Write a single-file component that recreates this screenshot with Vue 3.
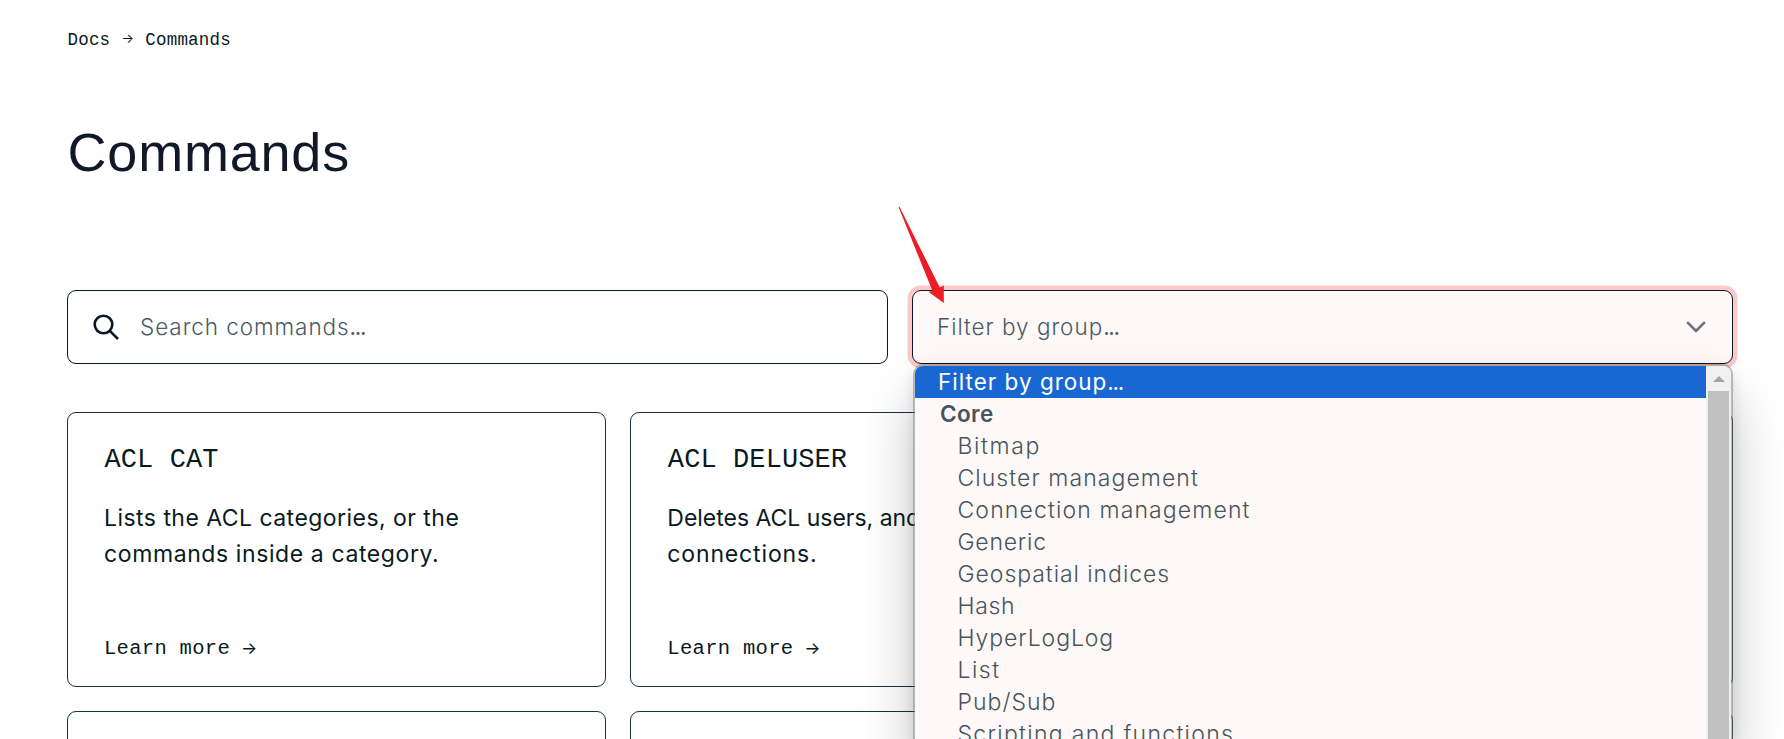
<script setup>
// Each label carries its own tracking, in pixels.
const groups = [
  { label: 'Bitmap', track: 1.65 },
  { label: 'Cluster management', track: 1.07 },
  { label: 'Connection management', track: 1.13 },
  { label: 'Generic', track: 0.75 },
  { label: 'Geospatial indices', track: 0.95 },
  { label: 'Hash', track: 0.65 },
  { label: 'HyperLogLog', track: 0.92 },
  { label: 'List', track: 1.5 },
  { label: 'Pub/Sub', track: 1.03 },
  { label: 'Scripting and functions', track: 1.3 }
]
const cards = [
  {
    name: 'ACL CAT',
    lines: [
      { text: 'Lists the ACL categories, or the', track: 0.46 },
      { text: 'commands inside a category.', track: 0.6 }
    ]
  },
  {
    name: 'ACL DELUSER',
    lines: [
      { text: 'Deletes ACL users, and', track: -0.02 },
      { text: 'connections.', track: 0.85 }
    ]
  },
  { name: '', lines: [] },
  { name: '', lines: [] },
  { name: '', lines: [] },
  { name: '', lines: [] }
]
</script>

<template>
  <main class="page">
    <nav class="crumbs">
      <span>Docs</span>
      <span class="arrow">→</span>
      <span>Commands</span>
    </nav>
    <h1>Commands</h1>

    <section class="filters">
      <div class="field search">
        <svg class="glass" viewBox="0 0 28 28" fill="none">
          <circle cx="11.5" cy="11.5" r="8.8" />
          <path d="M17.8 17.8 26 26" />
        </svg>
        <span class="hint">Search commands<span class="dots">...</span></span>
      </div>

      <div class="group">
        <div class="field select">
          <span class="chosen">Filter by group<span class="dots">...</span></span>
          <svg class="chevron" viewBox="0 0 20 12" fill="none">
            <path d="M2 1.8 10 10 18 1.8" />
          </svg>
        </div>
        <div class="menu">
          <ul class="options">
            <li class="active">Filter by group<span class="dots">...</span></li>
            <li class="heading">Core</li>
            <li v-for="g in groups" :key="g.label" class="item" :style="{ letterSpacing: g.track + 'px' }">{{ g.label }}</li>
          </ul>
          <div class="scrollbar">
            <div class="up"><i></i></div>
            <div class="thumb"></div>
          </div>
        </div>
        <svg class="pointer" viewBox="0 0 48 98">
          <path d="M0.5 1 34.5 85 30.5 85.8 45.8 97 45.8 79.5 41.8 81.5 1.5 0.8Z" />
        </svg>
      </div>
    </section>

    <section class="cards">
      <article v-for="(c, i) in cards" :key="i" class="card">
        <template v-if="c.name">
          <h2>{{ c.name }}</h2>
          <p v-for="l in c.lines" :key="l.text" :style="{ letterSpacing: l.track + 'px' }">{{ l.text }}</p>
          <a class="more"><span>Learn more</span><span class="arrow">→</span></a>
        </template>
      </article>
    </section>
  </main>
</template>

<style>
body { margin: 0; background: #fff; overflow: hidden; }
</style>

<style scoped>
.page {
  box-sizing: border-box;
  height: 739px;
  overflow: hidden;
  padding: 30px 51px 0 67px;
  color: #091a23;
  font-family: Inter, "Liberation Sans", sans-serif;
}
.crumbs {
  display: flex;
  height: 20px;
  padding-left: 0.5px;
  line-height: 20px;
  font-family: "Liberation Mono", monospace;
  font-size: 17.5px;
  letter-spacing: 0.2px;
}
.arrow { font-family: Inter, sans-serif; font-weight: 400; letter-spacing: 0; }
.crumbs .arrow { width: 35px; text-align: center; font-size: 13px; line-height: 17px; }
h1 {
  margin: 72px 0 0 0.5px;
  font: 400 54px/60px "Liberation Sans", sans-serif;
  letter-spacing: 0.8px;
  color: #111827;
}
.filters {
  display: grid;
  grid-template-columns: 1fr 1fr;
  gap: 24px;
  margin-top: 108px;
}
.group { position: relative; }
.field {
  box-sizing: border-box;
  height: 74px;
  display: flex;
  align-items: center;
  border: 1px solid #091a23;
  border-radius: 9px;
  font-size: 22.5px;
  font-weight: 300;
  color: #4a5a62;
}
.search { padding-left: 24px; }
.glass { width: 28px; height: 28px; stroke: #091a23; stroke-width: 2.6; }
.hint { margin: -2px 0 0 20px; letter-spacing: 0.93px; }
.dots { letter-spacing: -1.3px; font-weight: 400; }
.select {
  justify-content: space-between;
  padding: 0 26px 0 24px;
  background: #fff8f8;
  box-shadow: 0 0 0 4.5px #ffc8c9;
}
.chosen { margin-top: -2px; letter-spacing: 0.98px; }
.chevron { width: 20px; height: 12px; stroke: #6b7280; stroke-width: 2.6; stroke-linecap: round; stroke-linejoin: round; }
.menu {
  position: absolute;
  z-index: 2;
  top: 74px;
  left: 1px;
  right: 0;
  height: 375px;
  box-sizing: border-box;
  display: flex;
  border: 2px solid rgba(120, 120, 120, 0.5);
  border-bottom: 0;
  border-radius: 10px 10px 0 0;
  background: #fff8f8;
  background-clip: padding-box;
  overflow: hidden;
  box-shadow: 0 32px 56px rgba(0, 0, 0, 0.22), 0 6px 14px rgba(0, 0, 0, 0.1);
}
.options {
  flex: 1;
  margin: 0;
  padding: 0;
  list-style: none;
  font-size: 23px;
  line-height: 32px;
  font-weight: 300;
  color: #45555d;
}
.options li { height: 32px; white-space: nowrap; }
.active { padding-left: 23px; background: #1967d2; color: #fff; font-size: 22.5px; font-weight: 400; letter-spacing: 1px; }
.heading { padding-left: 25px; font-size: 22.5px; font-weight: 600; letter-spacing: 0.4px; }
.item { padding-left: 42.5px; }
.scrollbar { width: 25px; background: #f0f0f0; }
.up { height: 25px; display: flex; align-items: center; justify-content: center; }
.up i { border: 6px solid transparent; border-top: 0; border-bottom-color: #a3a3a3; }
.thumb { height: 348px; margin: 0 2px; background: #c1c1c1; }
.pointer { position: absolute; z-index: 3; left: -14px; top: -84px; width: 48px; height: 98px; fill: #ee1c25; }
.cards {
  display: grid;
  grid-template-columns: repeat(3, 1fr);
  grid-auto-rows: 275px;
  gap: 24px;
  margin-top: 48px;
}
.card {
  box-sizing: border-box;
  display: flex;
  flex-direction: column;
  padding: 29px 35px 22.5px 36px;
  border: 1px solid #163341;
  border-radius: 9px;
}
h2 {
  margin: 0 0 21.5px 0.5px;
  font: 400 27px/36px "Liberation Mono", monospace;
  letter-spacing: 0.1px;
}
.card p { margin: 0; font-size: 23px; line-height: 36.4px; font-weight: 400; white-space: nowrap; }
.more {
  display: flex;
  margin-top: auto;
  font-family: "Liberation Mono", monospace;
  font-size: 20.5px;
  line-height: 30px;
  letter-spacing: 0.3px;
}
.more .arrow { margin-left: 11px; font-size: 17px; line-height: 28px; }
</style>
